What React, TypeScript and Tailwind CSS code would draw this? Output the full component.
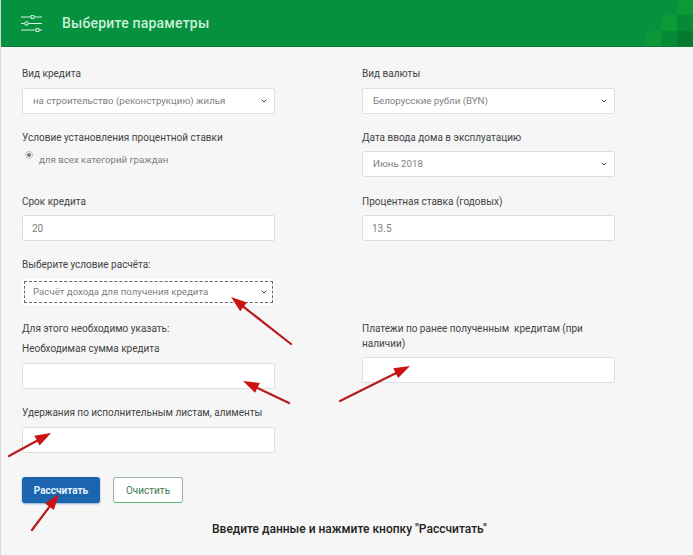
import React from "react";
import { ChevronDown } from "lucide-react";

const font = { fontFamily: 'Roboto, "Noto Sans", sans-serif' };

function Label({ children, className = "" }: { children: React.ReactNode; className?: string }) {
  return <div className={`pt-[1px] text-[10px] leading-[15px] text-[#444] ${className}`}>{children}</div>;
}

function Select({ value }: { value: string }) {
  return (
    <div className="w-[253px] h-[26px] flex items-center justify-between bg-white rounded-[2px] pl-[10px] pr-[6px] text-[9.7px] text-[#808080] border border-[#dfdfe2]">
      <span>{value}</span>
      <ChevronDown className="w-[8px] h-[8px] text-[#444]" strokeWidth={3} />
    </div>
  );
}

function DashedSelect({ value }: { value: string }) {
  return (
    <div className="w-[253px] h-[26px] p-[2px] bg-white rounded-[2px]">
      <div className="h-[22px] flex items-center justify-between border border-dashed border-[#666] pl-[8px] pr-[4px] text-[9.7px] text-[#808080]">
        <span>{value}</span>
        <ChevronDown className="w-[8px] h-[8px] text-[#444]" strokeWidth={3} />
      </div>
    </div>
  );
}

function Input({ value }: { value?: string }) {
  return (
    <div className="w-[253px] h-[26px] flex items-center bg-white rounded-[2px] border border-[#dfdfe2] px-[9px] text-[10px] text-[#808080]">
      {value}
    </div>
  );
}

function Arrow({ x1, y1, x2, y2 }: { x1: number; y1: number; x2: number; y2: number }) {
  const a = Math.atan2(y2 - y1, x2 - x1);
  const len = 16;
  const w = 5.5;
  const bx = x2 - len * Math.cos(a);
  const by = y2 - len * Math.sin(a);
  const nx = -Math.sin(a);
  const ny = Math.cos(a);
  return (
    <g>
      <line x1={x1} y1={y1} x2={bx} y2={by} stroke="#b91c1c" strokeWidth={2.2} strokeLinecap="round" />
      <polygon
        points={`${x2},${y2} ${bx + nx * w},${by + ny * w} ${bx - nx * w},${by - ny * w}`}
        fill="#cc1111"
      />
    </g>
  );
}

export default function App() {
  return (
    <div className="relative w-[693px] h-[555px] overflow-hidden bg-[#f6f6f7] border-l border-[#d8d8da]" style={font}>
      {/* Header */}
      <header className="relative h-[47px] bg-[#06913f] border-b border-[#058038] flex items-center overflow-hidden">
        <svg width="21" height="17" viewBox="0 0 21 17" className="ml-[20px] text-[#d8f2e0]" fill="none" stroke="currentColor" strokeWidth="1.1">
          <path d="M0 2h9.5M13.5 2H21M0 8.500h3.500M7.500 8.500H21M0 15h14.500M18.500 15H21" />
          <circle cx="11.500" cy="2" r="1.700" />
          <circle cx="5.500" cy="8.500" r="1.700" />
          <circle cx="16.500" cy="15" r="1.700" />
        </svg>
        <h1 className="ml-[20px] text-[14px] font-medium tracking-[0.2px] text-[#c9f0d6]">Выберите параметры</h1>
        {/* corner mosaic */}
        <div className="absolute right-0 top-0 w-[16px] h-[15px] bg-[#0a9a38]" />
        <div className="absolute right-0 top-[15px] w-[16px] h-[16px] bg-[#078a35]" />
        <div className="absolute right-[16px] top-[15px] w-[16px] h-[16px] bg-[#0c9a36]" />
        <div className="absolute right-0 top-[31px] w-[16px] h-[16px] bg-[#067a30]" />
        <div className="absolute right-[16px] top-[31px] w-[16px] h-[16px] bg-[#078a36]" />
        <div className="absolute right-[32px] top-[31px] w-[16px] h-[16px] bg-[#0c9838]" />
      </header>

      {/* Form */}
      <main className="pl-[21px] pt-[18px]">
        <div className="grid grid-cols-[253px_253px] gap-x-[87px]">
          <div className="h-[64px]">
            <Label className="mb-[7px]">Вид кредита</Label>
            <Select value="на строительство (реконструкцию) жилья" />
          </div>
          <div className="h-[64px]">
            <Label className="mb-[7px]">Вид валюты</Label>
            <Select value="Белорусские рубли (BYN)" />
          </div>
          <div className="h-[64px]">
            <Label>Условие установления процентной ставки</Label>
            <div className="flex items-center mt-[7px]">
              <span className="w-[8px] h-[8px] ml-[3px] -mt-[10px] rounded-full border border-[#bbb] bg-white flex items-center justify-center">
                <span className="w-[4px] h-[4px] rounded-full bg-[#777]" />
              </span>
              <span className="ml-[6px] text-[9.7px] leading-[16px] text-[#808080]">для всех категорий граждан</span>
            </div>
          </div>
          <div className="h-[64px]">
            <Label className="mb-[6px]">Дата ввода дома в эксплуатацию</Label>
            <Select value="Июнь 2018" />
          </div>
          <div className="h-[63px]">
            <Label className="mb-[6px]">Срок кредита</Label>
            <Input value="20" />
          </div>
          <div className="h-[63px]">
            <Label className="mb-[6px]">Процентная ставка (годовых)</Label>
            <Input value="13.5" />
          </div>
        </div>

        <div className="grid grid-cols-[253px_253px] gap-x-[87px]">
          <div>
            <Label className="mb-[7px]">Выберите условие расчёта:</Label>
            <DashedSelect value="Расчёт дохода для получения кредита" />
            <Label className="mt-[15px]">Для этого необходимо указать:</Label>
            <Label className="mt-[4px] mb-[7px]">Необходимая сумма кредита</Label>
            <Input />
            <Label className="mt-[15px] mb-[7px]">Удержания по исполнительным листам, алименты</Label>
            <Input />
          </div>
          <div className="pt-[64px]">
            <Label className="mb-[6px]">
              Платежи по ранее полученным&nbsp; кредитам (при
              <br />
              наличии)
            </Label>
            <Input />
          </div>
        </div>

        <div className="flex items-center gap-[13px] mt-[24px]">
          <button className="w-[78px] h-[26px] rounded-[3px] bg-[#1a65ad] text-[10px] font-bold text-[#e6f3fb] shadow-[0_1px_2px_rgba(26,101,173,0.5)]">
            Рассчитать
          </button>
          <button className="w-[70px] h-[26px] rounded-[3px] bg-white border border-[#9db8a4] border-b-[#5cb874] text-[10px] text-[#3f7a52]">
            Очистить
          </button>
        </div>
      </main>

      <p className="absolute left-[211px] top-[520px] text-[12px] font-medium text-[#222]">
        Введите данные и нажмите кнопку "Рассчитать"
      </p>

      {/* Red annotation arrows */}
      <svg className="absolute left-[-1px] top-0 pointer-events-none" width="693" height="555">
        <Arrow x1={291} y1={344} x2={231} y2={297} />
        <Arrow x1={289} y1={403} x2={243} y2={381} />
        <Arrow x1={340} y1={401} x2={410} y2={366} />
        <Arrow x1={9} y1={456} x2={51} y2={433} />
        <Arrow x1={32} y1={530} x2={59} y2={494} />
      </svg>
    </div>
  );
}
